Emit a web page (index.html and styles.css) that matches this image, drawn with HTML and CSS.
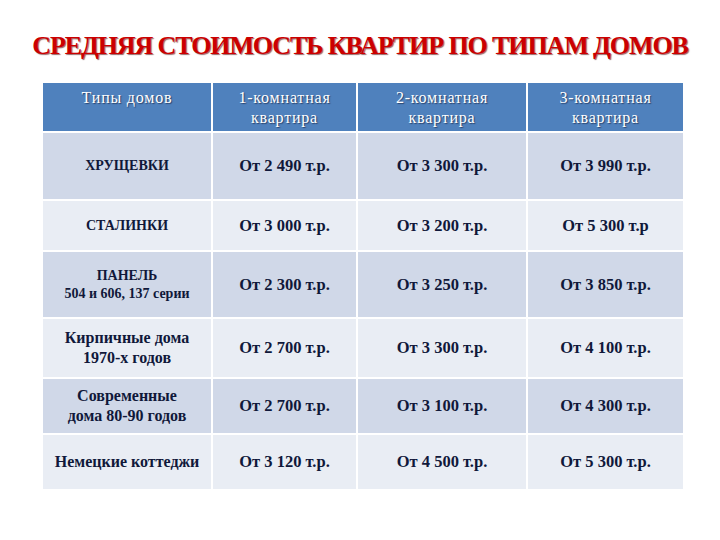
FILE: index.html
```html
<!DOCTYPE html>
<html lang="ru">
<head>
<meta charset="utf-8">
<link rel="stylesheet" href="styles.css">
</head>
<body>
<h1 class="title">СРЕДНЯЯ СТОИМОСТЬ КВАРТИР ПО ТИПАМ ДОМОВ</h1>
<table class="prices">
  <colgroup>
    <col class="c1"><col class="c2"><col class="c3"><col class="c4">
  </colgroup>
  <thead>
    <tr class="head">
      <th>Типы домов</th>
      <th>1-комнатная<br>квартира</th>
      <th>2-комнатная<br>квартира</th>
      <th>3-комнатная<br>квартира</th>
    </tr>
  </thead>
  <tbody>
    <tr class="odd r1">
      <td class="name small">ХРУЩЕВКИ</td>
      <td>От 2 490 т.р.</td><td>От 3 300 т.р.</td><td>От 3 990 т.р.</td>
    </tr>
    <tr class="even r2">
      <td class="name small">СТАЛИНКИ</td>
      <td>От 3 000 т.р.</td><td>От 3 200 т.р.</td><td>От 5 300 т.р</td>
    </tr>
    <tr class="odd r3">
      <td class="name small">ПАНЕЛЬ<br>504 и 606, 137 серии</td>
      <td>От 2 300 т.р.</td><td>От 3 250 т.р.</td><td>От 3 850 т.р.</td>
    </tr>
    <tr class="even r4">
      <td class="name">Кирпичные дома<br>1970-х годов</td>
      <td>От 2 700 т.р.</td><td>От 3 300 т.р.</td><td>От 4 100 т.р.</td>
    </tr>
    <tr class="odd r5">
      <td class="name">Современные<br>дома 80-90 годов</td>
      <td>От 2 700 т.р.</td><td>От 3 100 т.р.</td><td>От 4 300 т.р.</td>
    </tr>
    <tr class="even r6">
      <td class="name">Немецкие коттеджи</td>
      <td>От 3 120 т.р.</td><td>От 4 500 т.р.</td><td>От 5 300 т.р.</td>
    </tr>
  </tbody>
</table>
</body>
</html>
```
FILE: styles.css
```css
html, body {
  margin: 0;
  padding: 0;
  background: #ffffff;
  width: 720px;
  height: 540px;
  overflow: hidden;
}
body {
  font-family: "Liberation Serif", "DejaVu Serif", serif;
}
.title {
  margin: 31px 0 0 0;
  height: 30px;
  line-height: 30px;
  font-family: "Liberation Serif", "DejaVu Serif", serif;
  font-size: 26px;
  font-weight: bold;
  text-align: center;
  color: #cc0000;
  letter-spacing: -1.1px;
  text-shadow: 1px 1px 1px rgba(80, 0, 0, 0.6);
}
.prices {
  margin: 20px 0 0 41px;
  border-collapse: separate;
  border-spacing: 2px;
  table-layout: fixed;
  width: 644px;
  font-family: "Liberation Serif", "DejaVu Serif", serif;
}
.c1 { width: 168px; }
.c2 { width: 143px; }
.c3 { width: 168px; }
.c4 { width: 155px; }
.prices th {
  background: #4f81bd;
  color: #ffffff;
  font-weight: normal;
  font-size: 16px;
  letter-spacing: 0.8px;
  line-height: 20px;
  vertical-align: top;
  padding: 5px 2px 0 2px;
  text-align: center;
  height: 43px;
  text-shadow: 1px 1px 1px rgba(20, 30, 60, 0.6);
}
.prices td {
  color: #10183a;
  font-weight: bold;
  font-size: 16.5px;
  line-height: 20px;
  text-align: center;
  vertical-align: middle;
  padding: 0 2px;
}
.prices td.name { font-size: 16px; }
.prices td.small { font-size: 14px; line-height: 18px; }
.odd td { background: #d0d8e8; }
.even td { background: #e9edf4; }
.r1 td { height: 66px; }
.r2 td { height: 49px; }
.r3 td { height: 65px; }
.r4 td { height: 58px; }
.r5 td { height: 54px; }
.r6 td { height: 54px; }
```
